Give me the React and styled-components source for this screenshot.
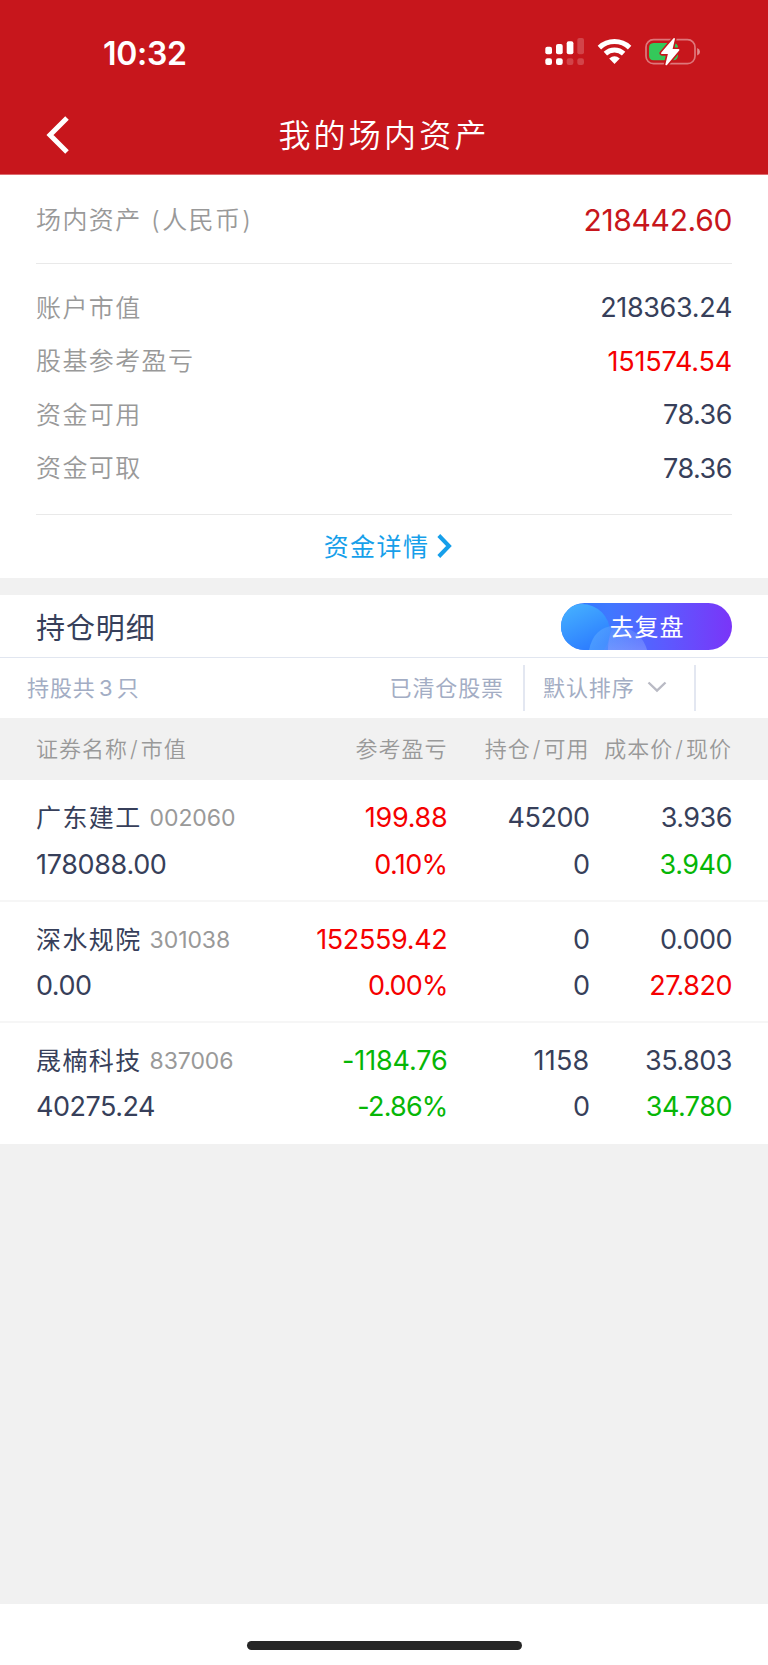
import React from 'react';
import styled, { createGlobalStyle } from 'styled-components';

const color = {
  brand: '#c7161c',
  ink: '#373f5a',
  muted: '#999999',
  slate: '#a3adc4',
  red: '#f50000',
  green: '#06b606',
  link: '#169fea',
  page: '#f1f1f1',
};

const GlobalStyle = createGlobalStyle`
  * { box-sizing: border-box; }
  body {
    margin: 0;
    background: #fff;
    font-family: Inter, "Noto Sans CJK SC", sans-serif;
    font-weight: 400;
    color: ${color.ink};
  }
`;

const Screen = styled.div`
  width: 768px;
  height: 1665px;
  display: flex;
  flex-direction: column;
  background: ${color.page};
  overflow: hidden;
`;

const Header = styled.header`
  height: 175px;
  flex: none;
  background: ${color.brand};
  color: #fff;
  border-bottom: 1px solid #dd6b6f;
`;

const StatusBar = styled.div`
  height: 98px;
  padding: 8px 68px 0 103px;
  display: flex;
  align-items: center;
  justify-content: space-between;
`;

const Clock = styled.span`
  font-size: 32px;
  font-weight: 600;
  letter-spacing: -0.3px;
`;

const StatusIcons = styled.svg`
  width: 156px;
  height: 30px;
  display: block;
  margin-top: -3px;
`;

const NavBar = styled.div`
  height: 75px;
  display: grid;
  grid-template-columns: 94px 1fr 94px;
  align-items: center;
`;

const BackIcon = styled.svg`
  width: 24px;
  height: 38px;
  margin: 0 0 2px 46px;
`;

const Title = styled.h1`
  margin: 0;
  text-align: center;
  font-size: 32px;
  font-weight: 350;
  letter-spacing: 3.2px;
  line-height: 44px;
`;

const Panel = styled.section`
  background: #fff;
  padding: 0 36px;
  height: 403px;
  flex: none;
`;

const TotalRow = styled.div`
  display: flex;
  align-items: center;
  justify-content: space-between;
  height: 89px;
  padding-top: 1px;
  border-bottom: 1px solid #e9e9e9;
`;

const Stats = styled.div`
  height: 251px;
  padding-top: 17px;
  border-bottom: 1px solid #e9e9e9;
`;

const StatRow = styled.div`
  display: flex;
  align-items: center;
  justify-content: space-between;
  height: 53.5px;
`;

const Label = styled.span`
  padding-bottom: 4px;
  font-size: 25px;
  font-weight: 350;
  letter-spacing: 1.4px;
  color: ${color.muted};
`;

const Spaced = styled.span`
  padding: 0 ${(p) => p.$gap}px;
`;

const Amount = styled.span`
  font-size: ${(p) => p.$size || 27}px;
  letter-spacing: ${(p) => p.$track.toFixed(2)}px;
  color: ${(p) => color[p.$tone || 'ink']};
`;

const DetailLink = styled.a`
  height: 63px;
  display: flex;
  align-items: center;
  justify-content: center;
  gap: 8px;
  padding: 0 0 3px 8px;
  color: ${color.link};
  font-size: 25px;
  letter-spacing: 1.4px;

  svg {
    margin-top: 1px;
  }
`;

const Holdings = styled.section`
  margin-top: 17px;
  flex: none;
  background: #fff;
`;

const HoldingsHead = styled.div`
  height: 63px;
  padding: 0 36px;
  display: flex;
  align-items: center;
  justify-content: space-between;
  border-bottom: 1px solid #e1e6f0;
`;

const SectionTitle = styled.h2`
  margin: 0;
  font-size: 29px;
  font-weight: 400;
  letter-spacing: 0.9px;
`;

const ReviewButton = styled.button`
  position: relative;
  width: 171px;
  height: 47px;
  padding: 0;
  border: 0;
  border-radius: 24px;
  overflow: hidden;
  color: #fff;
  font: inherit;
  font-size: 24px;
  letter-spacing: 0.8px;
  background: linear-gradient(90deg, #2b7cff 0%, #3f78ff 28%, #5b5bff 60%, #7a35f8 100%);
`;

const ButtonArt = styled.svg`
  position: absolute;
  inset: 0;
`;

const ButtonText = styled.span`
  position: relative;
  display: block;
  line-height: 47px;
  padding: 1px 0 0 1px;
`;

const FilterBar = styled.div`
  height: 60px;
  padding: 0 72px 0 27px;
  display: flex;
  align-items: center;
  color: ${color.slate};
  font-size: 22px;
  letter-spacing: 0.9px;
`;

const Count = styled.span`
  flex: 1;
  padding-bottom: 4px;
  word-spacing: -3.8px;
`;

const Cleared = styled.span`
  padding: 0 19px 4px 0;
`;

const Sort = styled.span`
  height: 46px;
  width: 173px;
  padding: 0 0 4px 18px;
  display: flex;
  align-items: center;
  gap: 12px;
  border: 2px solid #e3e7f1;
  border-width: 0 2px;

  svg {
    margin-top: 2px;
  }
`;

const columns = '253.5px 158px 142px 142.5px';

const TableHead = styled.div`
  height: 62px;
  padding: 0 36px 4px;
  display: grid;
  grid-template-columns: ${columns};
  align-items: center;
  background: ${color.page};
  color: ${color.muted};
  font-size: 22px;
  font-weight: 350;
  letter-spacing: 1px;
  white-space: nowrap;
`;

const HeadCell = styled.span`
  text-align: ${(p) => (p.$first ? 'left' : 'right')};
`;

const HoldingRow = styled.div`
  height: 121.2px;
  padding: 15.4px 36px 0;
  display: grid;
  grid-template-columns: ${columns};

  & + & {
    box-shadow: inset 0 1px #f6f6f6, 0 -1px #f6f6f6;
  }
`;

const Cell = styled.div`
  display: flex;
  flex-direction: column;
  align-items: ${(p) => (p.$first ? 'flex-start' : 'flex-end')};
  line-height: 46.5px;
  white-space: nowrap;
`;

const Stock = styled.span`
  display: flex;
  gap: 8px;
`;

const StockName = styled.span`
  font-size: 25px;
  letter-spacing: 1.4px;
`;

const StockCode = styled.span`
  font-size: 23px;
  letter-spacing: -0.1px;
  color: ${color.muted};
`;

const HomeArea = styled.footer`
  height: 61px;
  flex: none;
  margin-top: auto;
  padding-top: 37px;
  background: #fff;
`;

const HomeIndicator = styled.div`
  width: 275px;
  height: 9px;
  margin: 0 auto;
  border-radius: 5px;
  background: #262626;
`;

const stats = [
  { label: '账户市值', value: '218363.24' },
  { label: '股基参考盈亏', value: '151574.54', tone: 'red' },
  { label: '资金可用', value: '78.36' },
  { label: '资金可取', value: '78.36' },
];

const holdings = [
  { name: '广东建工', code: '002060', market: '178088.00', profit: '199.88', rate: '0.10%', profitTone: 'red', held: '45200', free: '0', cost: '3.936', price: '3.940', priceTone: 'green' },
  { name: '深水规院', code: '301038', market: '0.00', profit: '152559.42', rate: '0.00%', profitTone: 'red', held: '0', free: '0', cost: '0.000', price: '27.820', priceTone: 'red' },
  { name: '晟楠科技', code: '837006', market: '40275.24', profit: '-1184.76', rate: '-2.86%', profitTone: 'green', held: '1158', free: '0', cost: '35.803', price: '34.780', priceTone: 'green' },
];

// Tightens figures evenly, giving room back for narrow ones and taking some for a percent sign.
function tracking(text) {
  const ones = text.split('1').length - 1;
  const percent = text.includes('%') ? 1 : 0;
  return -0.5 + (1.4 * ones - 2 * percent) / text.length;
}

function Value({ children, size, tone }) {
  return (
    <Amount $size={size} $tone={tone} $track={tracking(children)}>
      {children}
    </Amount>
  );
}

function PairHead({ left, right, first }) {
  return (
    <HeadCell $first={first}>
      {left}
      <Spaced $gap={2}>/</Spaced>
      {right}
    </HeadCell>
  );
}

function DeviceStatus() {
  return (
    <StatusIcons viewBox="0 0 156 30" fill="#fff">
      <rect x="1.3" y="9.7" width="6.7" height="7.6" rx="2" />
      <rect x="12" y="7" width="6.7" height="10.3" rx="2" />
      <rect x="22.7" y="4.3" width="6.7" height="13" rx="2" />
      <rect x="33.3" y="1" width="6.7" height="16.3" rx="2" opacity=".2" />
      <rect x="1.3" y="21.3" width="6.7" height="6.7" rx="2.2" />
      <rect x="12" y="21.3" width="6.7" height="6.7" rx="2.2" />
      <rect x="22.7" y="21.3" width="6.7" height="6.7" rx="2.2" opacity=".2" />
      <rect x="33.3" y="21.3" width="6.7" height="6.7" rx="2.2" opacity=".2" />
      <g fill="none" stroke="#fff" strokeWidth="5">
        <path d="M55.4 10.6 A 22 22 0 0 1 85.6 10.6" />
        <path d="M61.4 16.6 A 13.4 13.4 0 0 1 79.6 16.6" />
      </g>
      <path d="M70.5 27 L65.2 21.6 Q70.5 17 75.8 21.6 Z" />
      <rect x="102" y="2.7" width="49" height="24" rx="7.5" fill="none" stroke="#fff" strokeWidth="1.7" opacity=".42" />
      <path d="M153.2 11 Q156 12 156 14.7 Q156 17.5 153.2 18.5 Z" opacity=".5" />
      <path d="M109.5 6 H129 Q134 6 134 11 V18.3 Q134 23.3 129 23.3 H109.5 Q105 23 105 18.5 V10.8 Q105 6.3 109.5 6 Z" fill="#34c85a" />
      <path d="M130 2 L118 16.2 H125 L122.3 27.4 L134.5 12.9 H127.5 Z" stroke="#c7161c" strokeWidth="5" strokeLinejoin="round" />
      <path d="M130 2 L118 16.2 H125 L122.3 27.4 L134.5 12.9 H127.5 Z" stroke="#fff" strokeWidth="1.8" strokeLinejoin="round" />
    </StatusIcons>
  );
}

function ReviewArt() {
  return (
    <ButtonArt width="171" height="47" viewBox="0 0 171 47">
      <defs>
        <linearGradient id="big" x1="0.2" y1="0" x2="0.6" y2="0.85">
          <stop offset="0" stopColor="#46b2ff" />
          <stop offset="1" stopColor="#2c7cff" />
        </linearGradient>
        <linearGradient id="small" x1="0" y1="0" x2="1" y2="0">
          <stop offset="0" stopColor="#5fb0ff" stopOpacity=".55" />
          <stop offset="1" stopColor="#7f9fff" stopOpacity=".1" />
        </linearGradient>
        <linearGradient id="front" x1="0" y1="0" x2="0" y2="1">
          <stop offset="0" stopColor="#7f9fff" stopOpacity=".1" />
          <stop offset="1" stopColor="#8f9fff" stopOpacity=".5" />
        </linearGradient>
      </defs>
      <circle cx="21" cy="29" r="28" fill="url(#big)" />
      <path d="M28 47 C31 32 40 23 53 23 C69 23 82 32 86 47 Z" fill="url(#small)" />
      <path d="M47 47 C47 38 49 29 53 23 C69 23 82 32 86 47 Z" fill="url(#front)" />
    </ButtonArt>
  );
}

export default function App() {
  return (
    <Screen>
      <GlobalStyle />
      <Header>
        <StatusBar>
          <Clock>10:32</Clock>
          <DeviceStatus />
        </StatusBar>
        <NavBar>
          <BackIcon viewBox="0 0 24 38">
            <path d="M21 2 L4 19 L21 36" fill="none" stroke="#fff" strokeWidth="5" />
          </BackIcon>
          <Title>我的场内资产</Title>
        </NavBar>
      </Header>

      <Panel>
        <TotalRow>
          <Label>
            场内资产 <Spaced $gap={1}>(</Spaced>人民币<Spaced $gap={1}>)</Spaced>
          </Label>
          <Value size={30} tone="brand">218442.60</Value>
        </TotalRow>
        <Stats>
          {stats.map((s) => (
            <StatRow key={s.label}>
              <Label>{s.label}</Label>
              <Value tone={s.tone}>{s.value}</Value>
            </StatRow>
          ))}
        </Stats>
        <DetailLink>
          资金详情
          <svg width="15" height="24" viewBox="0 0 15 24">
            <path d="M1.8 1.5 L12 12 L1.8 22.5" fill="none" stroke="currentColor" strokeWidth="4" />
          </svg>
        </DetailLink>
      </Panel>

      <Holdings>
        <HoldingsHead>
          <SectionTitle>持仓明细</SectionTitle>
          <ReviewButton>
            <ReviewArt />
            <ButtonText>去复盘</ButtonText>
          </ReviewButton>
        </HoldingsHead>
        <FilterBar>
          <Count>持股共 3 只</Count>
          <Cleared>已清仓股票</Cleared>
          <Sort>
            默认排序
            <svg width="20" height="12" viewBox="0 0 20 12">
              <path d="M1.5 1.5 L10 9.5 L18.5 1.5" fill="none" stroke="#b9bac4" strokeWidth="2.4" />
            </svg>
          </Sort>
        </FilterBar>
        <TableHead>
          <PairHead first left="证券名称" right="市值" />
          <HeadCell>参考盈亏</HeadCell>
          <PairHead left="持仓" right="可用" />
          <PairHead left="成本价" right="现价" />
        </TableHead>
        {holdings.map((h) => (
          <HoldingRow key={h.code}>
            <Cell $first>
              <Stock>
                <StockName>{h.name}</StockName>
                <StockCode>{h.code}</StockCode>
              </Stock>
              <Value>{h.market}</Value>
            </Cell>
            <Cell>
              <Value tone={h.profitTone}>{h.profit}</Value>
              <Value tone={h.profitTone}>{h.rate}</Value>
            </Cell>
            <Cell>
              <Value>{h.held}</Value>
              <Value>{h.free}</Value>
            </Cell>
            <Cell>
              <Value>{h.cost}</Value>
              <Value tone={h.priceTone}>{h.price}</Value>
            </Cell>
          </HoldingRow>
        ))}
      </Holdings>

      <HomeArea>
        <HomeIndicator />
      </HomeArea>
    </Screen>
  );
}
